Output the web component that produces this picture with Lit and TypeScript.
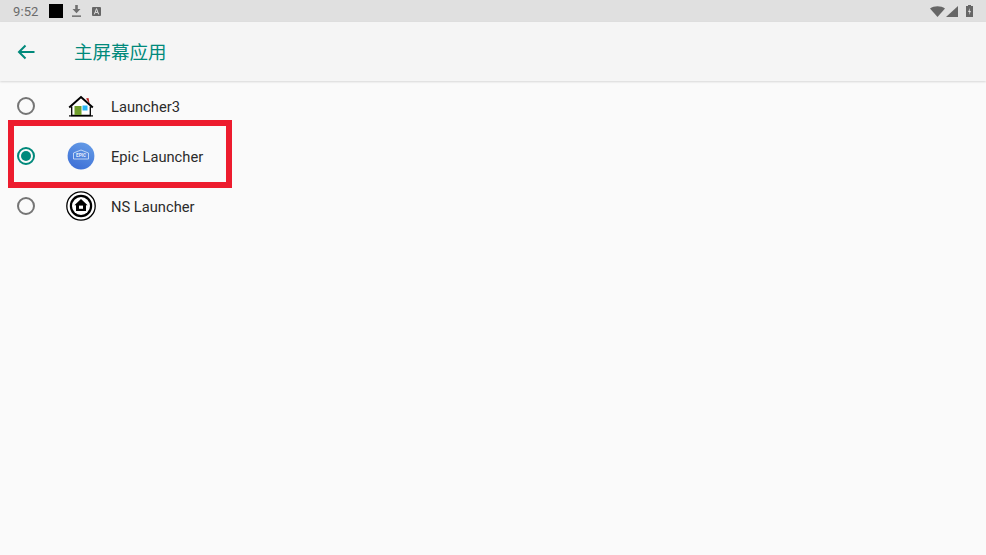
import { LitElement, html, css, svg } from "lit";
import { customElement } from "lit/decorators.js";

const home3 = svg`<svg class="appicon" width="26" height="22" viewBox="0 0 26 22">
  <path d="M18 3.5 L20.5 3 L21.5 8.5 Z" fill="#b71c1c"/>
  <path d="M4 12 L13 3 L22 12 V20 H4 Z" fill="#fff"/>
  <path d="M1.2 12.6 L13 2 L24.8 12.6" fill="none" stroke="#000" stroke-width="2"/>
  <path d="M3.7 11.5 V20.5 H22.3 V11.5" fill="none" stroke="#000" stroke-width="1.3"/>
  <rect x="6.5" y="11" width="7" height="9" fill="#6f9e2c"/>
  <rect x="14.5" y="10.5" width="5" height="5" fill="#29b6f6"/>
  <path d="M1 20.9 H25" stroke="#000" stroke-width="1.2"/>
</svg>`;

const epic = svg`<svg class="appicon" width="28" height="28" viewBox="0 0 28 28">
  <defs><linearGradient id="g" x1="0.7" y1="0" x2="0.3" y2="1"><stop offset="0" stop-color="#639ae6"/><stop offset="1" stop-color="#3d6fd6"/></linearGradient></defs>
  <circle cx="14" cy="14" r="13.4" fill="url(#g)"/>
  <path d="M6.5 11 L14 8 L21.5 11 V17 H6.5 Z" fill="none" stroke="#dbe8fb" stroke-width="0.8"/>
  <text x="14" y="15.4" text-anchor="middle" font-family="Roboto, sans-serif" font-size="4.6" font-weight="700" fill="#e6effc">EPIC</text>
</svg>`;

const ns = svg`<svg class="appicon" width="30" height="30" viewBox="0 0 30 30">
  <circle cx="15" cy="15" r="14.2" fill="#fff" stroke="#000" stroke-width="1.3"/>
  <circle cx="15" cy="15" r="11.2" fill="#000"/>
  <circle cx="15" cy="15" r="9" fill="#fff"/>
  <path d="M15 8 L21.6 14.2 H20 V20 H10 V14.2 H8.4 Z" fill="#000"/>
  <rect x="13" y="14.6" width="4" height="3.2" fill="#fff"/>
</svg>`;

@customElement("app-root")
export class AppRoot extends LitElement {
  static styles = css`
    :host { display: block; width: 986px; height: 555px; background: #fafafa; position: relative; overflow: hidden; font-family: Roboto, "Noto Sans CJK SC", sans-serif; }
    .status { height: 22px; background: #e0e0e0; display: flex; align-items: center; padding: 0 13px 0 13px; color: #6b6b6b; font-size: 13px; }
    .time { width: 36px; letter-spacing: 0.1px; }
    .black { width: 14px; height: 14px; background: #000; margin-right: 9px; }
    .dl { margin-right: 11px; display: block; }
    .a { display: block; }
    .spacer { flex: 1; }
    .sys { display: flex; align-items: center; gap: 1px; }
    .batt { margin-left: 7px; }
    .toolbar { height: 59px; background: #f5f5f5; display: flex; align-items: center; box-shadow: 0 1px 2px rgba(0,0,0,.14); position: relative; padding-left: 17px; }
    .back { display: block; margin-right: 38px; }
    .title { color: #00897b; font-size: 18.5px; line-height: 24px; padding-top: 2px; }
    .list { display: flex; flex-direction: column; }
    .row { height: 50px; display: flex; align-items: center; }
    .radio { width: 18px; height: 18px; border-radius: 50%; border: 2px solid #757575; box-sizing: border-box; margin-left: 17px; display: flex; align-items: center; justify-content: center; flex: none; }
    .radio.on { border-color: #00897b; }
    .radio.on::after { content: ""; width: 10px; height: 10px; border-radius: 50%; background: #00897b; }
    .iconbox { width: 30px; height: 30px; margin-left: 31px; margin-right: 15px; display: flex; align-items: center; justify-content: center; flex: none; }
    .appicon { display: block; }
    .label { color: #2b2b2b; font-size: 14.7px; padding-top: 2px; }
    .mark { position: absolute; left: 8px; top: 120px; width: 224px; height: 68px; border: 6px solid #ed1c2e; box-sizing: border-box; }
  `;
  render() {
    const rows = [
      { icon: home3, label: "Launcher3", on: false },
      { icon: epic, label: "Epic Launcher", on: true },
      { icon: ns, label: "NS Launcher", on: false },
    ];
    return html`
      <div class="status">
        <span class="time">9:52</span>
        <span class="black"></span>
        <svg class="dl" width="9" height="12" viewBox="0 0 9 12"><path d="M3.2 0 H5.8 V4 H8.5 L4.5 8.2 L0.5 4 H3.2 Z" fill="#6f6f6f"/><rect x="0" y="10.4" width="9" height="1.5" fill="#6f6f6f"/></svg>
        <svg class="a" width="9" height="9" viewBox="0 0 9 9"><rect width="9" height="9" rx="1" fill="#666"/><path d="M2.3 7.4 L4.5 1.6 L6.7 7.4 M3.2 5.4 H5.8" fill="none" stroke="#e0e0e0" stroke-width="1"/></svg>
        <span class="spacer"></span>
        <div class="sys">
          <svg width="15" height="11" viewBox="0 0 15 11"><path d="M0 2.6 C4 -0.6 11 -0.6 15 2.6 L7.5 11 Z" fill="#666"/></svg>
          <svg width="12" height="11" viewBox="0 0 12 11"><path d="M12 0 V11 H0 Z" fill="#666"/></svg>
          <svg class="batt" width="7" height="12" viewBox="0 0 7 12"><path d="M2 0 H5 V1 H7 V12 H0 V1 H2 Z" fill="#666"/><path d="M4 3 L2 7 H3.4 L3 10 L5 6 H3.6 Z" fill="#e0e0e0"/></svg>
        </div>
      </div>
      <div class="toolbar">
        <svg class="back" width="19" height="16" viewBox="0 0 19 16"><path d="M17.5 8 H2.5 M8.5 1.5 L2 8 L8.5 14.5" fill="none" stroke="#00897b" stroke-width="2"/></svg>
        <span class="title">主屏幕应用</span>
      </div>
      <div class="list">
        ${rows.map(r => html`<div class="row">
          <span class="radio ${r.on ? "on" : ""}"></span>
          <span class="iconbox">${r.icon}</span>
          <span class="label">${r.label}</span>
        </div>`)}
      </div>
      <div class="mark"></div>
    `;
  }
}
